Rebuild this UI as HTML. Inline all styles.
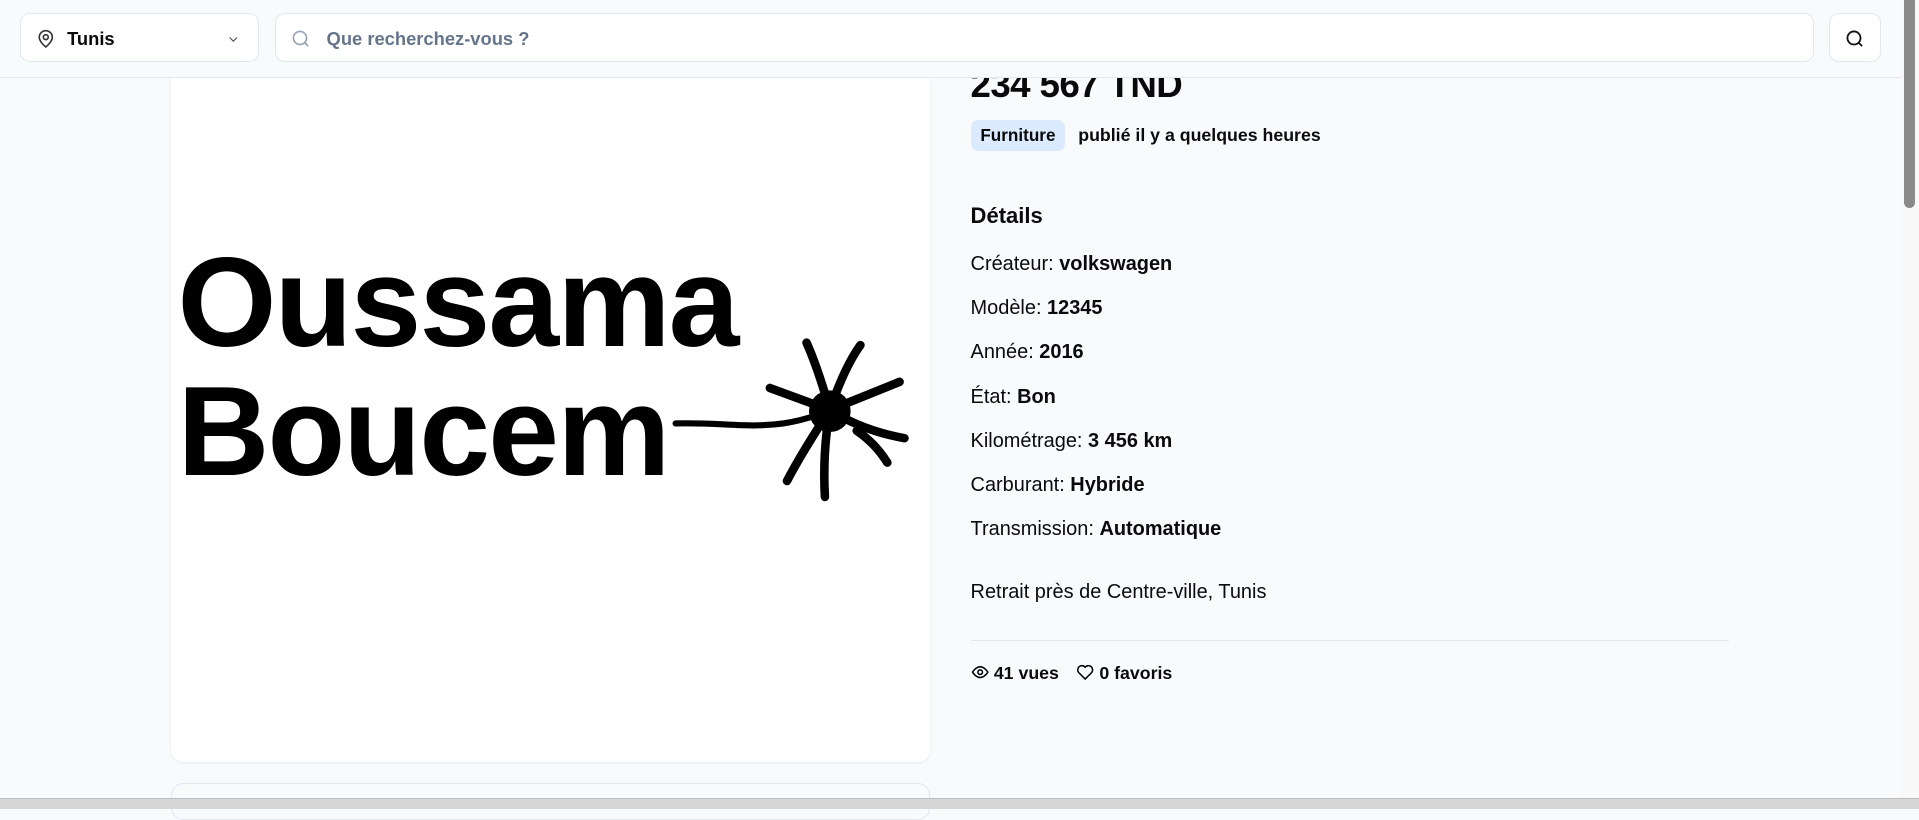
<!DOCTYPE html>
<html><head><meta charset="utf-8">
<style>
html{zoom:1.2239;}
*{box-sizing:border-box;margin:0;padding:0}
body{width:1568px;height:661px;overflow:hidden;background:#f8fafc;font-family:"Liberation Sans",sans-serif;color:#0a0a0a;position:relative}
.hdr{position:absolute;left:0;top:0;width:1553px;height:64px;border-bottom:1px solid #e2e8f0;background:#f8fafc;z-index:5}
.box{position:absolute;top:11px;height:40px;background:#fff;border:1px solid #e2e8f0;border-radius:8px}
.card{position:absolute;left:140px;top:64px;width:620px;height:559px;background:#fff;border-radius:0 0 10px 10px;box-shadow:0 1px 2px rgba(0,0,0,.06)}
.card2{position:absolute;left:140px;top:640px;width:620px;height:30px;background:#f8fafc;border:1px solid #e2e8f0;border-radius:10px}
.logo{position:absolute;left:145px;font-size:104px;font-weight:bold;letter-spacing:-1.5px;line-height:1;color:#000}
.r{position:absolute;left:793px;font-size:16.3px;white-space:nowrap}
.r b{font-weight:bold}
.sb{position:absolute;left:1553px;top:0;width:15px;height:652px;background:#f8f8f8;z-index:6}
.th{position:absolute;left:1556px;top:0;width:9px;height:170px;background:#8a8a8a;border-radius:0 0 5px 5px;z-index:7}
.bot{position:absolute;left:0;top:652px;width:1568px;height:9px;background:#d6d6d6;border-top:1px solid #bdbdbd;z-index:8}
</style></head><body>
<div class="hdr">
 <div class="box" style="left:16px;width:196px">
  <svg style="position:absolute;left:13px;top:12px" width="16" height="16" viewBox="0 0 24 24" fill="none" stroke="#333" stroke-width="2"><path d="M20 10c0 6-8 12-8 12s-8-6-8-12a8 8 0 0 1 16 0z"/><circle cx="12" cy="10" r="3"/></svg>
  <span style="position:absolute;left:38px;top:11px;font-size:15px;font-weight:bold">Tunis</span>
  <svg style="position:absolute;left:168px;top:14px" width="12" height="12" viewBox="0 0 24 24" fill="none" stroke="#555" stroke-width="2"><path d="M6 9l6 6 6-6"/></svg>
 </div>
 <div class="box" style="left:225px;width:1257px">
  <svg style="position:absolute;left:12px;top:12px" width="16" height="16" viewBox="0 0 24 24" fill="none" stroke="#94a3b8" stroke-width="2"><circle cx="11" cy="11" r="8"/><path d="M21 21l-4.3-4.3"/></svg>
  <span style="position:absolute;left:41px;top:11px;font-size:15px;font-weight:bold;color:#64748b">Que recherchez-vous ?</span>
 </div>
 <div class="box" style="left:1494px;width:43px">
  <svg style="position:absolute;left:13px;top:12px" width="16" height="16" viewBox="0 0 24 24" fill="none" stroke="#111" stroke-width="2.2"><circle cx="11" cy="11" r="8"/><path d="M21 21l-4.3-4.3"/></svg>
 </div>
</div>
<div class="card"></div>
<div class="logo" style="top:195px">Oussama</div>
<div class="logo" style="top:301px">Boucem</div>
<svg style="position:absolute;left:0;top:0" width="1568" height="661">
 <g stroke="#000" stroke-linecap="round" fill="none">
  <path d="M552 346 C590 345 610 350 640 346 C660 343 670 338 678 336" stroke-width="5"/>
  <g stroke-width="7">
  <path d="M678 335 Q668 300 659 280"/><path d="M678 335 Q690 300 703 282"/><path d="M678 335 L629 317"/><path d="M678 335 L735 312"/>
  <path d="M678 335 Q705 352 739 358"/><path d="M700 352 Q715 362 725 378"/><path d="M678 335 Q672 370 674 406"/><path d="M678 335 Q655 370 643 393"/>
  </g>
 </g>
 <circle cx="678" cy="336" r="17" fill="#000"/>
</svg>
<div class="r" style="top:52px;font-size:30px;font-weight:bold;letter-spacing:-0.5px">234 567 TND</div>
<div class="r" style="top:98px;height:25px;padding:0 8px;background:#dbeafe;border-radius:6px;font-size:14px;font-weight:bold;line-height:25px">Furniture</div>
<div class="r" style="left:881px;top:102px;font-size:14.5px;font-weight:bold">publié il y a quelques heures</div>
<div class="r" style="top:166px;font-size:18px;font-weight:bold">Détails</div>
<div class="r" style="top:207px">Créateur: <b>volkswagen</b></div>
<div class="r" style="top:243px">Modèle: <b>12345</b></div>
<div class="r" style="top:279px">Année: <b>2016</b></div>
<div class="r" style="top:315px">État: <b>Bon</b></div>
<div class="r" style="top:351px">Kilométrage: <b>3 456 km</b></div>
<div class="r" style="top:387px">Carburant: <b>Hybride</b></div>
<div class="r" style="top:423px">Transmission: <b>Automatique</b></div>
<div class="r" style="top:475px">Retrait près de Centre-ville, Tunis</div>
<div style="position:absolute;left:793px;top:523px;width:620px;height:1px;background:#e2e8f0"></div>
<div class="r" style="top:542px;font-size:14.5px;font-weight:bold">
 <svg width="15" height="15" viewBox="0 0 24 24" fill="none" stroke="#000" stroke-width="2" style="vertical-align:-2px"><path d="M2 12s4-7 10-7 10 7 10 7-4 7-10 7S2 12 2 12z"/><circle cx="12" cy="12" r="3"/></svg> 41 vues
 <svg width="15" height="15" viewBox="0 0 24 24" fill="none" stroke="#000" stroke-width="2" style="vertical-align:-2px;margin-left:10px"><path d="M12 21l-8.5-8.6A5 5 0 0 1 12 5.5a5 5 0 0 1 8.5 6.9z"/></svg> 0 favoris
</div>
<div class="card2"></div>
<div class="sb"></div><div class="th"></div>
<div class="bot"></div>
</body></html>
